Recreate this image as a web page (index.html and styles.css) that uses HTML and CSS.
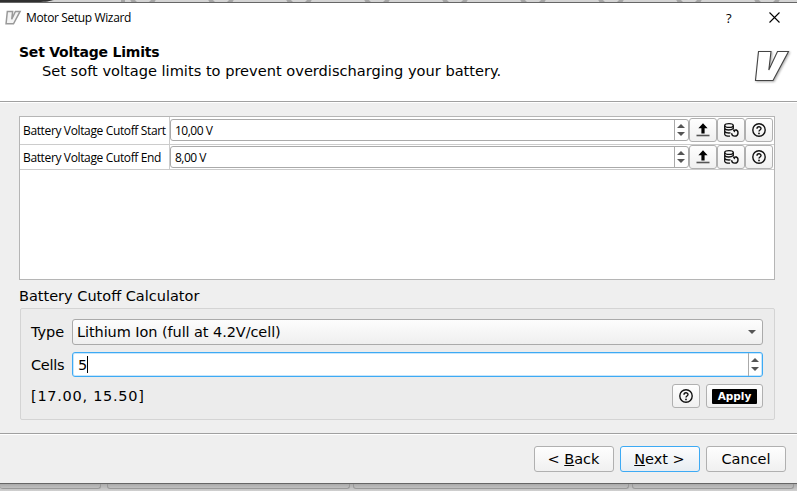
FILE: index.html
```html
<!DOCTYPE html>
<html lang="en">
<head>
<meta charset="utf-8">
<title>Motor Setup Wizard</title>
<link rel="stylesheet" href="styles.css">
</head>
<body>
<svg class="defs" width="0" height="0" aria-hidden="true">
  <symbol id="vee" viewBox="0 0 40 36"><path d="M5.500 2.500H18L15.800 21L24.500 2.500H35.500L20 31.500H2.500Z"/></symbol>
  <symbol id="upload" viewBox="0 0 16 16"><path d="M8 1.200L12.600 6.200H9.600V11.500H6.400V6.200H3.400Z" fill="#000"/><path d="M1.500 13.500H14.500" stroke="#555" stroke-width="1.600"/></symbol>
  <symbol id="database" viewBox="0 0 16 16"><g fill="none" stroke="#111" stroke-width="1.300"><ellipse cx="6" cy="3.500" rx="4.300" ry="1.900"/><path d="M1.700 3.500V12.300C1.700 13.500 4 14.200 7 14.200M10.300 3.500V7M1.700 6.400C2.700 8.500 8 8.500 10.300 6.600M1.700 9.400C2.700 11 5 11.200 7.500 10.900"/><path d="M12.500 7.800A3.200 3.200 0 1 1 8.600 11.200" stroke-width="1.400"/></g><path d="M9.500 7.500H13.500L11.300 10.500Z" fill="#111"/></symbol>
  <symbol id="help" viewBox="0 0 16 16"><circle cx="8" cy="8" r="6.200" fill="none" stroke="#111" stroke-width="1.400"/><path d="M6 6.700C6 4.100 10 4.200 10 6.500C10 8 8 8 8 9.500" fill="none" stroke="#111" stroke-width="1.400"/><circle cx="8" cy="11.400" r=".9" fill="#111"/></symbol>
</svg>
<svg class="backdrop" width="797" height="2" viewBox="0 0 797 2" aria-hidden="true">
  <path d="M0 0H54C50 1 46 2 38 2H0Z" fill="#303030"/>
  <g fill="none" stroke="#a5a5a5" stroke-width="4">
    <path d="M123 0V3"/><circle cx="143" cy="-6" r="12"/><circle cx="221" cy="-6" r="12"/><circle cx="299" cy="-6" r="12"/><circle cx="377" cy="-6" r="12"/><circle cx="455" cy="-6" r="12"/><circle cx="533" cy="-6" r="12"/><circle cx="611" cy="-6" r="12"/><circle cx="689" cy="-6" r="12"/><circle cx="767" cy="-6" r="12"/>
  </g>
</svg>
<main class="window">
  <header class="titlebar">
    <svg class="app-icon" width="17" height="16"><use href="#vee"/></svg>
    <span class="caption">Motor Setup Wizard</span>
    <span class="ask">?</span>
    <svg class="close" width="11" height="11"><path d="M.5 .5L10.500 10.500M10.500 .5L.5 10.500" stroke="#000" stroke-width="1.100"/></svg>
  </header>
  <section class="heading">
    <div>
      <h1>Set Voltage Limits</h1>
      <p>Set soft voltage limits to prevent overdischarging your battery.</p>
    </div>
    <svg class="logo" width="40" height="36"><use href="#vee"/></svg>
  </section>
  <section class="content">
    <div class="table">
      <div class="row first">
        <label><span>Battery Voltage Cutoff Start</span></label>
        <div class="spin"><span>10,00 V</span><i class="arrows"><b class="up"></b><b class="down"></b></i></div>
        <button><svg width="16" height="16"><use href="#upload"/></svg></button><button><svg width="16" height="16"><use href="#database"/></svg></button><button><svg width="16" height="16"><use href="#help"/></svg></button>
      </div>
      <div class="row">
        <label><span>Battery Voltage Cutoff End</span></label>
        <div class="spin"><span>8,00 V</span><i class="arrows"><b class="up"></b><b class="down"></b></i></div>
        <button><svg width="16" height="16"><use href="#upload"/></svg></button><button><svg width="16" height="16"><use href="#database"/></svg></button><button><svg width="16" height="16"><use href="#help"/></svg></button>
      </div>
    </div>
    <h2>Battery Cutoff Calculator</h2>
    <div class="group">
      <div class="field type"><label>Type</label><div class="combo"><span>Lithium Ion (full at 4.2V/cell)</span><b class="down"></b></div></div>
      <div class="field cells"><label>Cells</label><div class="spin focus"><span>5</span><u class="caret"></u><i class="arrows"><b class="up"></b><b class="down"></b></i></div></div>
      <div class="result"><output>[17.00, 15.50]</output><button class="help"><svg width="16" height="16"><use href="#help"/></svg></button><button class="apply"><span>Apply</span></button></div>
    </div>
  </section>
  <footer>
    <button><span>&lt; <u>B</u>ack</span></button>
    <button class="default"><span><u>N</u>ext &gt;</span></button>
    <button><span>Cancel</span></button>
  </footer>
</main>
<div class="behind"><i></i><i></i><i></i><i></i></div>
</body>
</html>
```
FILE: styles.css
```css
* { box-sizing: border-box; }
body {
  margin: 0; width: 797px; height: 491px; overflow: hidden;
  display: flex; flex-direction: column;
  background: #d4d4d4; color: #000;
  font: 14.5px/18px "DejaVu Sans", sans-serif;
}
.defs { position: absolute; }
.backdrop { display: block; flex: none; }
.window {
  height: 482px; flex: none; display: flex; flex-direction: column;
  background: #efefef; border-top: 1px solid #666; border-bottom: 1px solid #666;
}
.titlebar {
  height: 29px; flex: none; display: flex; align-items: center;
  background: #fff; padding: 0 17.5px 0 5px;
  font: 12px/16px "Open Sans", sans-serif;
}
.app-icon { fill: #f4f4f4; stroke: #999; stroke-width: 3.500; }
.caption { margin-left: 4px; letter-spacing: -.37px; }
.ask { margin-left: auto; font-size: 13px; margin-right: 37px; }
.heading {
  height: 70px; flex: none; display: flex; justify-content: space-between;
  background: #fff; border-bottom: 1px solid #a0a0a0; padding: 11px 4px 0 19px;
}
h1, h2, p { margin: 0; font-size: inherit; }
h1 { font-size: 14px; line-height: 18px; letter-spacing: -.22px; }
p { margin: 1px 0 0 23px; white-space: nowrap; font-size: 14.6px; }
.logo { margin-top: 6px; fill: #fff; stroke: #444; stroke-width: 1.100; filter: drop-shadow(1px 1px 1px #aaa); }
.content { flex: 1; padding: 13px 22px 0 19px; border-top: 1px solid #fff; }
.table { height: 164px; border: 1px solid #b5b5b5; background: #fff; }
.row {
  height: 25px; display: grid; grid-template-columns: 150px 519px 28px 28px 28px;
  align-items: center; border-bottom: 1px solid #ccc;
  font: 12px/16px "Open Sans", sans-serif;
}
.row.first { height: 28px; padding-bottom: 1px; }
.row label { align-self: stretch; display: flex; align-items: center; border-right: 1px solid #ccc; padding-left: 3px; white-space: nowrap; }
.row.first label { margin-bottom: -1px; }
.row label span { letter-spacing: -.36px; padding-top: 1px; }
.spin, .combo { display: flex; align-items: center; border: 1px solid #aaa; border-radius: 3px; background: #fff; }
.row .spin { height: 22px; padding-left: 4px; letter-spacing: -.5px; }
.row .spin span { padding-top: 2px; }
.row button { height: 24px; width: 28px; justify-self: center; }
.arrows {
  width: 14px; height: 100%; margin-left: auto; border-left: 1px solid #aaa; padding-right: 1px;
  display: flex; flex-direction: column; align-items: center; justify-content: space-evenly;
}
.up, .down { width: 0; height: 0; border: 4px solid transparent; }
.up { border-top: 0; border-bottom-color: #555; }
.down { border-bottom: 0; border-top-color: #555; }
button {
  display: flex; align-items: center; justify-content: center; padding: 0;
  border: 1px solid #b0b0b0; border-radius: 3px;
  background: linear-gradient(#fefefe, #f0f0f0); color: #000; font: inherit;
}
h2 { font-weight: normal; line-height: 18px; margin-top: 7px; }
.group { height: 112px; margin: 3px 0 0 1px; border: 1px solid #d4d4d4; border-radius: 2px; background: #ececec; padding: 10px 11px 0 10px; }
.field { display: grid; grid-template-columns: 41px 1fr; align-items: center; letter-spacing: -.08px; }
.combo { height: 26px; background: linear-gradient(#fdfdfd, #efefef); padding: 0 6px 0 4px; }
.combo .down { margin-left: auto; }
.cells { margin-top: 7px; }
.cells label { letter-spacing: -.3px; }
.focus { height: 25px; border-color: #3daaf4; box-shadow: inset 0 0 0 1px #c7e6fc; padding-left: 5px; }
.caret { width: 1px; height: 17px; background: #000; }
.result { display: flex; align-items: center; margin-top: 7px; }
output { letter-spacing: .72px; margin-right: auto; }
.help { width: 28px; height: 24px; }
.apply { width: 57px; height: 24px; margin-left: 6px; }
.apply span { width: 45px; height: 15px; border-radius: 1px; background: #000; color: #fff; font-size: 10.5px; line-height: 15px; font-weight: bold; }
footer {
  height: 50px; flex: none; display: flex; justify-content: flex-end; gap: 6px;
  border-top: 1px solid #a0a0a0; box-shadow: inset 0 1px #fff; padding: 12px 11px 0 0;
}
footer button { width: 80px; height: 26px; }
footer .default { border-color: #3daaf4; background: linear-gradient(#fdfdfe, #e7edf2); padding-right: 1px; }
footer button:first-child { padding-right: 1px; }
.behind { height: 7px; display: grid; grid-template-columns: 107px 246px 279px 165px; background: linear-gradient(#aaa, #d0d0d0); }
.behind i { height: 5px; margin-right: 3px; border: 1px solid #999; border-top: 0; border-radius: 0 0 3px 3px; }
.behind i:first-child { margin-right: 6px; border-left: 0; }
```
